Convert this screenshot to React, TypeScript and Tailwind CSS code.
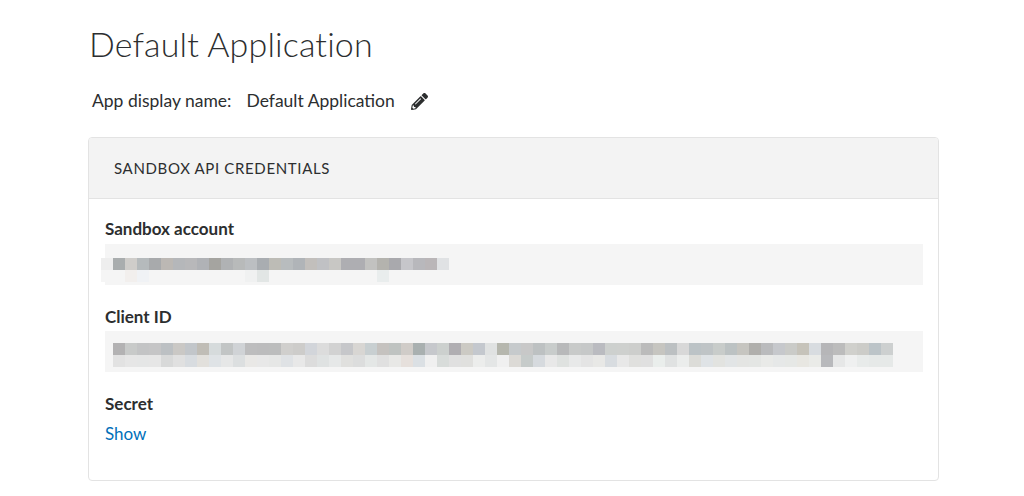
import { FaPencilAlt } from "react-icons/fa";

const sandboxTop = [
  "#eeeeee", "#a9adae", "#cfcdca", "#b5babc", "#a8aaac", "#bcb8b4", "#b5b7ba", "#b8b8ba", "#b0b2b6", "#a5a4a0",
  "#b0b2b4", "#b8baba", "#bcbfc2", "#a9adb1", "#bdbcb6", "#b8bcbe", "#b0b4b8", "#c2bfbc", "#c0c1c4", "#c8c7c4",
  "#aeaeb2", "#aeaeb2", "#c2c2c0", "#b4b3ae", "#a9a9ad", "#c6c6ca", "#b8b8bc", "#bab6b8", "#e0e2e4",
];
const sandboxBottom = [
  "#f5f5f5", "#f5f5f5", "#f2efed", "#f0f2f5", "#f5f5f5", "#f5f5f5", "#f5f5f5", "#f5f5f5", "#f5f5f5", "#f5f5f5",
  "#f5f5f5", "#f5f5f5", "#f0f1f1", "#e2e6e5", "#f5f5f5", "#f5f5f5", "#f5f5f5", "#f5f5f5", "#f5f5f5", "#f5f5f5",
  "#f5f5f5", "#f5f5f5", "#f5f5f5", "#e9eded",
];
const clientTop = [
  "#b3b2b3", "#c8cac9", "#c3c4c5", "#c5c5c6", "#bcc0c3", "#cac8c5", "#c2c6ca", "#c0bdb6", "#d6dbdc", "#c2c5c5",
  "#d0d3d6", "#bdbdbe", "#bcbcbd", "#bcbdbd", "#d0cfcd", "#cdccca", "#d2d5da", "#dcdcdc", "#d2d2d2", "#c6c7ca",
  "#d8d6d3", "#c8cfd1", "#c5c2bf", "#bfc3c1", "#d0ccc8", "#a9b0b0", "#c6c8cc", "#ccd0ce", "#b0aeb2", "#cccac4",
  "#c4c8ce", "#e0e2e2", "#b6b7ae", "#c6cacc", "#c8c8c8", "#bdc1c2", "#c8cccb", "#b8b9ba", "#c8cac9", "#c6c8c8",
  "#babbc0", "#cdd0ce", "#ced0ce", "#cdcecc", "#bbbbbb", "#c6c5c0", "#bcc0c2", "#d8d8d8", "#bcc3c6", "#bfc4c6",
  "#c8ccca", "#bcc2c3", "#c6c5c0", "#b0afac", "#babbbd", "#c6c8cc", "#cacbc8", "#c6c3ba", "#d8dce0", "#b6b6b8",
  "#bcbcbc", "#d0d0cc", "#ccccc8", "#bcc4c8", "#cdd0d0",
];
const clientBottom = [
  "#e2e2e2", "#e6e6e6", "#e5e6e6", "#e6e6e6", "#d8d9d9", "#e0e0e0", "#d8dce0", "#e2e0dc", "#dfe3e6", "#e6e7e7",
  "#dcdfe0", "#e9e8e6", "#e8e8e8", "#e6e7e6", "#dfe2e5", "#e8e8e8", "#dcdcdc", "#dfe2e2", "#e6e8e8", "#e0e0de",
  "#dcdddd", "#e4e7e6", "#e0e0e0", "#e8e8e6", "#e6e0dc", "#dbe0e4", "#f0f0f0", "#d8dcda", "#e0e0e0", "#e0e0de",
  "#ecedec", "#e4e6e6", "#f0f0f0", "#dcdad6", "#c6cbca", "#d6dade", "#e8e8e8", "#dfe2e0", "#e8e9e9", "#e4e4e4",
  "#e8e8e6", "#d8dce0", "#e8e8e8", "#e0e0de", "#e0e0e0", "#eaeeec", "#e0e2e2", "#ebedec", "#dcdcd8", "#dfe3e6",
  "#e2e3e0", "#e2e5e6", "#e4e5e3", "#e4e6e4", "#e9eae8", "#e6e8e8", "#e6e8e6", "#e8e7e2", "#eaebe8", "#b8b9bc",
  "#e6e7e7", "#eff0f0", "#e8ebea", "#e6e9e8", "#e6e9e8",
];

// redacted value in the screenshot, one small block per mosaic cell
function Mosaic({ rows }: { rows: string[][] }) {
  return (
    <div className="flex flex-col">
      {rows.map((row, i) => (
        <div key={i} className="flex h-3">
          {row.map((c, j) => (
            <div key={j} className="w-3 h-3 shrink-0" style={{ backgroundColor: c }} />
          ))}
        </div>
      ))}
    </div>
  );
}

export default function App() {
  return (
    <div className="w-[1024px] h-[496px] overflow-hidden bg-white pl-[88px] text-[#2c2e2f] font-['Lato',sans-serif]">
      <h1 className="pl-[1px] pt-[23px] h-[77px] text-[34px] leading-[42px] font-light text-[#2c2e2f] tracking-[0.15px]">
        Default Application
      </h1>
      <div className="flex items-center h-[48px] pl-[4px] text-[17.5px]">
        <span>App display name:</span>
        <span className="ml-[15px]">Default Application</span>
        <FaPencilAlt className="ml-[16px] w-[17px] h-[17px] text-[#2c2e2f]" />
      </div>
      <div className="mt-[12px] w-[851px] h-[344px] rounded border border-[#e3e3e3] overflow-hidden">
        <div className="h-[61px] flex items-center pl-[25px] bg-[#f3f3f3] border-b border-[#e3e3e3] text-[15px] tracking-[0.65px]">
          SANDBOX API CREDENTIALS
        </div>
        <div className="pl-[16px] pr-[15px]">
          <div className="pt-[18px] h-[45px] text-[17px] leading-[24px] font-bold">Sandbox account</div>
          <div className="h-[41px] bg-[#f5f5f5] pt-[14px]">
            <div className="ml-[-4px]">
              <Mosaic rows={[sandboxTop, sandboxBottom]} />
            </div>
          </div>
          <div className="mt-[20px] h-[26px] text-[17px] leading-[24px] font-bold">Client ID</div>
          <div className="h-[41px] bg-[#f5f5f5] pt-[12px] pl-[8px]">
            <Mosaic rows={[clientTop, clientBottom]} />
          </div>
          <div className="mt-[20px] h-[30px] text-[17px] leading-[24px] font-bold">Secret</div>
          <a className="block text-[17px] leading-[24px] text-[#0070ba]">Show</a>
        </div>
      </div>
    </div>
  );
}
